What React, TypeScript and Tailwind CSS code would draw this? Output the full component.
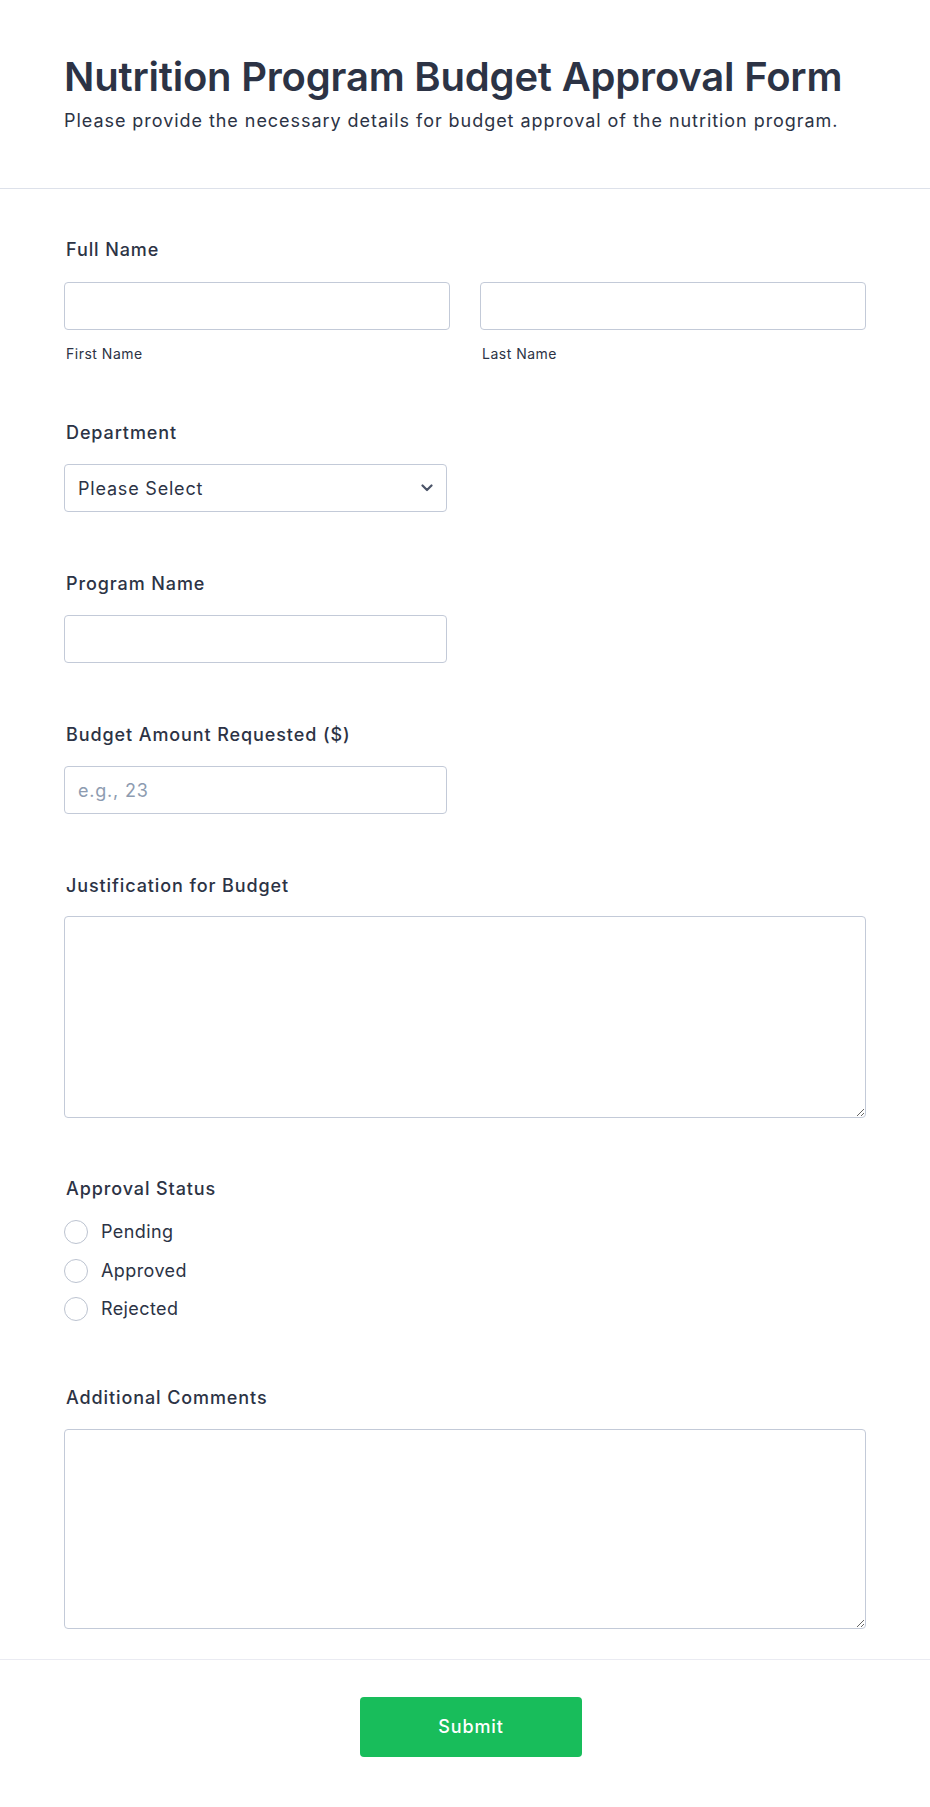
import React from "react";

const font = { fontFamily: "Inter, 'Noto Sans', sans-serif" };

function Label({ children }: { children: React.ReactNode }) {
  return (
    <div className="text-[18px] leading-[28px] font-medium tracking-[0.9px] text-[#2c3345]">{children}</div>
  );
}

const inputCls =
  "block h-[48px] w-full rounded-[4px] border border-[#c3cad8] bg-white px-[13px] text-[18px] tracking-[0.8px] text-[#2c3345] placeholder:text-[#8d9bb0] outline-none";

export default function App() {
  return (
    <div className="min-h-[1807px] w-full bg-white text-[#2c3345]" style={font}>
      <header className="border-b border-[#dde1ea] px-[64px] pt-[53px] pb-[53px]">
        <h1 className="text-[40px] leading-[48px] font-semibold tracking-[-0.2px] text-[#2c3345]">
          Nutrition Program Budget Approval Form
        </h1>
        <p className="mt-[6px] text-[18px] leading-[28px] tracking-[0.95px] text-[#2c3345]">
          Please provide the necessary details for budget approval of the nutrition program.
        </p>
      </header>

      <form className="px-[64px] pt-[47px]">
        {/* Full Name */}
        <div className="pl-[2px]">
          <Label>Full Name</Label>
        </div>
        <div className="mt-[18px] grid grid-cols-2 gap-[30px]">
          <div>
            <input className={inputCls} type="text" />
            <div className="mt-[15px] pl-[2px] text-[14px] leading-[18px] tracking-[0.5px] text-[#2c3345]">First Name</div>
          </div>
          <div>
            <input className={inputCls} type="text" />
            <div className="mt-[15px] pl-[2px] text-[14px] leading-[18px] tracking-[0.5px] text-[#2c3345]">Last Name</div>
          </div>
        </div>

        {/* Department */}
        <div className="mt-[56px] pl-[2px]">
          <Label>Department</Label>
        </div>
        <div className="relative mt-[17px] w-[383px]">
          <select
            className={inputCls + " appearance-none pr-[36px]"}
            defaultValue=""
          >
            <option value="">Please Select</option>
          </select>
          <svg
            className="pointer-events-none absolute right-[14px] top-[20px]"
            width="12"
            height="8"
            viewBox="0 0 12 8"
            fill="none"
          >
            <path d="M1.5 1.5L6 6L10.5 1.5" stroke="#4b5468" strokeWidth="2.2" strokeLinecap="round" strokeLinejoin="round" />
          </svg>
        </div>

        {/* Program Name */}
        <div className="mt-[58px] pl-[2px]">
          <Label>Program Name</Label>
        </div>
        <div className="mt-[17px] w-[383px]">
          <input className={inputCls} type="text" />
        </div>

        {/* Budget */}
        <div className="mt-[58px] pl-[2px]">
          <Label>Budget Amount Requested ($)</Label>
        </div>
        <div className="mt-[17px] w-[383px]">
          <input className={inputCls} type="text" placeholder="e.g., 23" />
        </div>

        {/* Justification */}
        <div className="mt-[58px] pl-[2px]">
          <Label>Justification for Budget</Label>
        </div>
        <div className="mt-[16px]">
          <textarea className="block h-[202px] w-full rounded-[4px] border border-[#c3cad8] bg-white px-[13px] py-[10px] text-[18px] outline-none" />
        </div>

        {/* Approval Status */}
        <div className="mt-[57px] pl-[2px]">
          <Label>Approval Status</Label>
        </div>
        <div className="mt-[10px] flex flex-col">
          {["Pending", "Approved", "Rejected"].map((o) => (
            <label key={o} className="flex h-[38.5px] items-center gap-[13px]">
              <span className="block h-[24px] w-[24px] rounded-full border border-[#bcc3d0] bg-white" />
              <span className="text-[18px] leading-[28px] tracking-[0.4px] text-[#2c3345]">{o}</span>
            </label>
          ))}
        </div>

        {/* Additional Comments */}
        <div className="mt-[55px] pl-[2px]">
          <Label>Additional Comments</Label>
        </div>
        <div className="mt-[17px]">
          <textarea className="block h-[200px] w-full rounded-[4px] border border-[#c3cad8] bg-white px-[13px] py-[10px] text-[18px] outline-none" />
        </div>
      </form>

      <div className="mt-[30px] flex justify-center border-t border-[#eaebf2] pt-[37px] pb-[50px] pl-[12px]">
        <button
          type="button"
          className="h-[60px] w-[222px] rounded-[4px] bg-[#18bd5b] text-[18px] font-medium tracking-[0.9px] text-white"
        >
          Submit
        </button>
      </div>
    </div>
  );
}
